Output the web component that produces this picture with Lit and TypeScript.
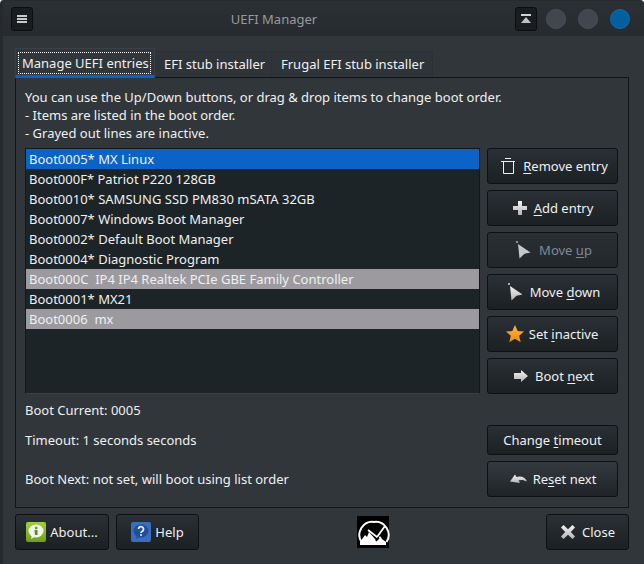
import { LitElement, html, css, svg } from "lit";
import { customElement } from "lit/decorators.js";

const rows: [string, string][] = [
  ["Boot0005* MX Linux", "sel"],
  ["Boot000F* Patriot P220 128GB", ""],
  ["Boot0010* SAMSUNG SSD PM830 mSATA 32GB", ""],
  ["Boot0007* Windows Boot Manager", ""],
  ["Boot0002* Default Boot Manager", ""],
  ["Boot0004* Diagnostic Program", ""],
  ["Boot000C  IP4 IP4 Realtek PCIe GBE Family Controller", "off"],
  ["Boot0001* MX21", ""],
  ["Boot0006  mx", "off"],
];

const defs = svg`<linearGradient id="w" x1="0" y1="0" x2="0" y2="1"><stop offset="0" stop-color="#f4f4f4"/><stop offset="1" stop-color="#b4b4b4"/></linearGradient>`;
const icoTrash = html`<svg width="20" height="20" viewBox="0 0 20 20" fill="none" stroke="#eef0f1" stroke-width="1"><path d="M4 5.500h14M8 2.500h6M6.500 6v11.500h10V6"/></svg>`;
const icoPlus = html`<svg width="16" height="16" viewBox="0 0 16 16"><defs>${defs}</defs><path d="M6 1h4v5h5v4h-5v5H6v-5H1V6h5z" fill="url(#w)"/></svg>`;
const icoPtr = (dim: boolean) => html`<svg width="20" height="20" viewBox="0 0 20 20"><defs>${defs}</defs><circle cx="4" cy="2" r=".9" fill=${dim ? "#c4c6c8" : "#eee"}/><path d="M5 4l12.500 8.500-6 1.200L6.500 18.500z" fill=${dim ? "#c4c6c8" : "url(#w)"}/></svg>`;
const icoStar = html`<svg width="20" height="20" viewBox="4 0 20 20"><defs><linearGradient id="s" x1="0" y1="0" x2="0" y2="1"><stop offset="0" stop-color="#ffb347"/><stop offset="1" stop-color="#f08a12"/></linearGradient></defs><path d="M12 1l2.700 6 6.300.6-4.800 4.200 1.500 6.400-5.700-3.400-5.700 3.400 1.500-6.400L3 7.600 9.300 7z" fill="url(#s)"/></svg>`;
const icoArrow = html`<svg width="18" height="14" viewBox="0 0 18 14"><defs>${defs}</defs><path d="M3 4h7V1l7 6-7 6v-3H3z" fill="url(#w)"/></svg>`;
const icoUndo = html`<svg width="18" height="14" viewBox="0 0 18 14"><defs>${defs}</defs><path d="M1 9.500L6 2.500l1.500 2.500C12 3.500 16 5 18 9.500 15 8 12 7.500 9.500 8.500L11 11z" fill="url(#w)"/></svg>`;
const icoX = html`<svg width="16" height="16" viewBox="0 0 16 16"><defs>${defs}</defs><path d="M3.500 1L8 5.200 12.500 1 15 3.500 10.800 8 15 12.500 12.500 15 8 10.800 3.500 15 1 12.500 5.200 8 1 3.500z" fill="url(#w)"/></svg>`;
const icoAbout = html`<svg width="20" height="20" viewBox="0 0 20 20"><defs><linearGradient id="g" x1="0" y1="0" x2="0" y2="1"><stop offset="0" stop-color="#a0cf3c"/><stop offset="1" stop-color="#6f9f1f"/></linearGradient></defs><rect width="20" height="20" rx="2" fill="url(#g)"/><ellipse cx="10" cy="9" rx="7.500" ry="6.500" fill="#f2f5ea"/><path d="M6 13l-1 4 5-3z" fill="#f2f5ea"/><path d="M8.500 8h3v5h-2.500z" fill="#5f8a1c"/><circle cx="10.200" cy="6" r="1.300" fill="#5f8a1c"/></svg>`;
const icoHelp = html`<svg width="20" height="20" viewBox="0 0 20 20"><rect width="20" height="20" rx="2" fill="#3b6dbb"/><ellipse cx="10" cy="9" rx="7.500" ry="6.500" fill="#1f4e9c"/><path d="M6 13l-1 4 5-3z" fill="#1f4e9c"/><path d="M7.500 7a2.500 2.500 0 1 1 3.500 2.400c-.8.4-1 .8-1 1.600" fill="none" stroke="#eef3fb" stroke-width="1.700"/><circle cx="10" cy="13" r="1" fill="#eef3fb"/></svg>`;
const icoLogo = html`<svg width="32" height="32" viewBox="0 0 32 32"><rect width="32" height="32" fill="#000"/><path d="M4.500 26A13 13 0 0 1 17 6 13 13 0 0 1 29.500 26" fill="none" stroke="#fff" stroke-width="2"/><path d="M3 29v-3l5-7 2 2 2-5 6 7 2 1 3-4 2 3 4 3v3z" fill="#fff"/><path d="M11 14l9 7 8-11" fill="none" stroke="#fff" stroke-width="1.800"/><path d="M18 24l3-3 1.500 1.500-3 3z" fill="#000"/></svg>`;

@customElement("app-root")
export class AppRoot extends LitElement {
  static styles = css`
    :host { display: block; width: 644px; height: 564px; }
    * { box-sizing: border-box; }
    svg { overflow: visible; flex: none; display: block; }
    .win { width: 644px; height: 564px; background: #31363b; color: #eff0f1; font: 13px/18px "Noto Sans", sans-serif; display: flex; flex-direction: column; overflow: hidden; border-radius: 4px 4px 0 0; border: 1px solid #262a2e; border-width: 1px 0 0 3px; }
    .title { height: 35px; flex: none; background: linear-gradient(#2b3035, #272b2f); display: flex; align-items: center; padding: 0 14px 0 8px; }
    .tb { width: 22px; height: 24px; background: #1a1d20; border: 1px solid #0c0d0e; border-radius: 3px; display: flex; align-items: center; justify-content: center; }
    .name { flex: 1; text-align: center; font-size: 13px; color: #969a9f; }
    .circ { width: 20px; height: 20px; border-radius: 50%; background: #40474f; border: 1px solid #4a5058; margin-left: 12px; }
    .circ.first { margin-left: 9px; }
    .circ.blue { background: #045f9e; border-color: #0f6ba9; }
    .body { flex: 1; padding: 15px 15px 14px 12px; display: flex; flex-direction: column; }
    .tabs { display: flex; height: 27px; }
    .tab { padding: 3px 0 0 9px; height: 27px; color: #eff0f1; border: 1px solid #2c3136; border-left: none; background: #2f3439; }
    .t2 { width: 117px; }
    .t3 { width: 161px; }
    .tab.a { margin-top: -3px; height: 30px; width: 140px; padding: 3px 0 0 2px; border: 1px solid #3a4046; border-bottom: 3px solid #0b62c4; background: #31363b; position: relative; z-index: 1; }
    .focus { outline: 1px dotted #fff; outline-offset: -1px; padding-left: 4px; width: 133px; height: 22px; display: block; line-height: 22px; }
    .panel { height: 431px; margin-top: -1px; width: 614px; border: 1px solid #121416; padding: 10px 10px 0 9px; }
    .main { display: grid; grid-template-columns: 455px 131px; column-gap: 7px; margin-top: 6px; }
    .list { height: 246px; background: #1d2427; border: 1px solid #14181a; border-width: 1px 1px 0 1px; border-bottom: 1px solid #3a4046; }
    .row { height: 20px; line-height: 20px; padding-left: 3px; white-space: pre; }
    .row.sel { background: #0b63c5; }
    .row.off { background: #9c9a9f; }
    .side { display: flex; flex-direction: column; gap: 6px; }
    .btn { height: 36px; width: 131px; display: flex; align-items: center; justify-content: center; gap: 6px; background: linear-gradient(#2a3035, #1c2023); border: 1px solid #0e1012; border-radius: 3px; color: #eff0f1; font: inherit; padding: 0; flex: none; }
    .btn.dim { color: #7d8a96; background: linear-gradient(#2a2f34, #22272b); }
    .btn.hi { background: linear-gradient(#343a3f, #1f2327); }
    .btn.tight { gap: 2px; }
    .btn.ptr { gap: 5px; }
    .btn.short { height: 30px; }
    .btn u { text-underline-offset: 2px; }
    .info { grid-column: 1 / 3; display: grid; grid-template-columns: 455px 131px; column-gap: 7px; grid-template-rows: 18px 30px 36px; row-gap: 6px; margin-top: 7px; align-items: center; }
    .wide { grid-column: 1 / 3; }
    .foot { margin-top: 6px; height: 36px; display: flex; align-items: center; }
    .foot .btn { gap: 4px; }
    .about { width: 94px; }
    .foot .help { width: 83px; margin-left: 7px; }
    .logo { margin-left: 158px; width: 32px; height: 32px; display: block; }
    .foot .close { width: 83px; margin-left: auto; gap: 6px; }
  `;

  btn(icon: unknown, pre: string, u: string, post: string, cls = "") {
    return html`<button class="btn ${cls}">${icon}<span>${pre}<u>${u}</u>${post}</span></button>`;
  }

  render() {
    return html`<div class="win">
      <div class="title">
        <div class="tb"><svg width="12" height="12" viewBox="0 0 12 12"><path d="M1 2h10v2H1zM1 5h10v2H1zM1 8h10v2H1z" fill="#c8cacc"/></svg></div>
        <div class="name">UEFI Manager</div>
        <div class="tb"><svg width="12" height="12" viewBox="0 0 12 12"><path d="M1 1h10v2H1z" fill="#d0d2d4"/><path d="M6 4l5 6H1z" fill="#bfc1c3"/></svg></div>
        <div class="circ first"></div><div class="circ"></div><div class="circ blue"></div>
      </div>
      <div class="body">
        <div class="tabs">
          <div class="tab a"><span class="focus">Manage UEFI entries</span></div>
          <div class="tab t2">EFI stub installer</div>
          <div class="tab t3">Frugal EFI stub installer</div>
        </div>
        <div class="panel">
          <div>You can use the Up/Down buttons, or drag &amp; drop items to change boot order.</div>
          <div>- Items are listed in the boot order.</div>
          <div>- Grayed out lines are inactive.</div>
          <div class="main">
            <div class="list">${rows.map(([t, c]) => html`<div class="row ${c}">${t}</div>`)}</div>
            <div class="side">
              ${this.btn(icoTrash, "", "R", "emove entry")}
              ${this.btn(icoPlus, "", "A", "dd entry")}
              ${this.btn(icoPtr(true), "Move ", "u", "p", "dim")}
              ${this.btn(icoPtr(false), "Move ", "d", "own", "ptr")}
              ${this.btn(icoStar, "Set ", "i", "nactive", "tight")}
              ${this.btn(icoArrow, "Boot ", "n", "ext")}
            </div>
            <div class="info">
              <div class="wide">Boot Current: 0005</div>
              <div>Timeout: 1 seconds seconds</div>
              <button class="btn short"><span>Change <u>t</u>imeout</span></button>
              <div>Boot Next: not set, will boot using list order</div>
              <button class="btn hi">${icoUndo}<span>Re<u>s</u>et next</span></button>
            </div>
          </div>
        </div>
        <div class="foot">
          <button class="btn about">${icoAbout}<span>About...</span></button>
          <button class="btn help">${icoHelp}<span>Help</span></button>
          <span class="logo">${icoLogo}</span>
          <button class="btn close">${icoX}<span>Close</span></button>
        </div>
      </div>
    </div>`;
  }
}
